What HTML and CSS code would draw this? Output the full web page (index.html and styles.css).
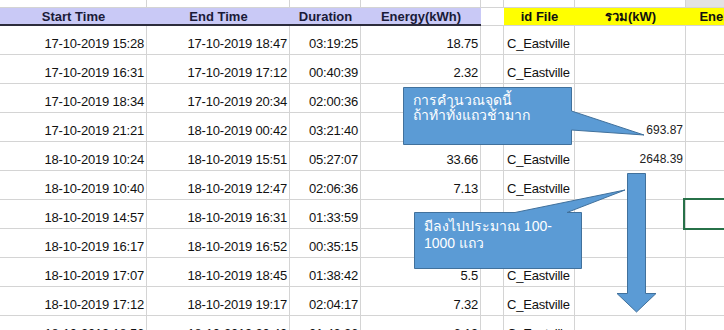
FILE: index.html
```html
<!DOCTYPE html>
<html>
<head>
<meta charset="utf-8">
<link rel="stylesheet" href="styles.css">
</head>
<body>
<div class="sheet">
  <div class="grid">
    <div class="c"></div><div class="c"></div><div class="c"></div><div class="c"></div><div class="c"></div><div class="c"></div><div class="c"></div><div class="c gray"></div>

    <div class="h lav">Start Time</div><div class="h lav">End Time</div><div class="h lav">Duration</div><div class="h lav">Energy(kWh)</div><div class="h blank"></div><div class="h yel">id File</div><div class="h yel">รวม(kW)</div><div class="h yel">Energy(kWh)</div>

    <div class="c r">17-10-2019 15:28</div><div class="c r">17-10-2019 18:47</div><div class="c r">03:19:25</div><div class="c r">18.75</div><div class="c"></div><div class="c">C_Eastville</div><div class="c"></div><div class="c"></div>
    <div class="c r">17-10-2019 16:31</div><div class="c r">17-10-2019 17:12</div><div class="c r">00:40:39</div><div class="c r">2.32</div><div class="c"></div><div class="c">C_Eastville</div><div class="c"></div><div class="c"></div>
    <div class="c r">17-10-2019 18:34</div><div class="c r">17-10-2019 20:34</div><div class="c r">02:00:36</div><div class="c r">15.31</div><div class="c"></div><div class="c">C_Eastville</div><div class="c"></div><div class="c"></div>
    <div class="c r">17-10-2019 21:21</div><div class="c r">18-10-2019 00:42</div><div class="c r">03:21:40</div><div class="c r">22.86</div><div class="c"></div><div class="c">C_Eastville</div><div class="c r sm">693.87</div><div class="c"></div>
    <div class="c r">18-10-2019 10:24</div><div class="c r">18-10-2019 15:51</div><div class="c r">05:27:07</div><div class="c r">33.66</div><div class="c"></div><div class="c">C_Eastville</div><div class="c r sm">2648.39</div><div class="c"></div>
    <div class="c r">18-10-2019 10:40</div><div class="c r">18-10-2019 12:47</div><div class="c r">02:06:36</div><div class="c r">7.13</div><div class="c"></div><div class="c">C_Eastville</div><div class="c"></div><div class="c"></div>
    <div class="c r">18-10-2019 14:57</div><div class="c r">18-10-2019 16:31</div><div class="c r">01:33:59</div><div class="c r">5.85</div><div class="c"></div><div class="c">C_Eastville</div><div class="c"></div><div class="c"></div>
    <div class="c r">18-10-2019 16:17</div><div class="c r">18-10-2019 16:52</div><div class="c r">00:35:15</div><div class="c r">2.41</div><div class="c"></div><div class="c">C_Eastville</div><div class="c"></div><div class="c"></div>
    <div class="c r">18-10-2019 17:07</div><div class="c r">18-10-2019 18:45</div><div class="c r">01:38:42</div><div class="c r">5.5</div><div class="c"></div><div class="c">C_Eastville</div><div class="c"></div><div class="c"></div>
    <div class="c r">18-10-2019 17:12</div><div class="c r">18-10-2019 19:17</div><div class="c r">02:04:17</div><div class="c r">7.32</div><div class="c"></div><div class="c">C_Eastville</div><div class="c"></div><div class="c"></div>
    <div class="c r">18-10-2019 18:56</div><div class="c r">18-10-2019 20:40</div><div class="c r">01:43:26</div><div class="c r">6.19</div><div class="c"></div><div class="c">C_Eastville</div><div class="c"></div><div class="c"></div>
  </div>

  <div class="sel"></div>

  <svg class="shapes" width="724" height="330" viewBox="0 0 724 330">
    <path d="M403.5 87.5 H571.5 V111 L644 135 L571.5 130 V144.5 H403.5 Z" fill="#5b9bd5" stroke="#41719c" stroke-width="1"/>
    <path d="M414.5 212.5 H515 L625 190 L567 212.5 H581.5 V268.5 H414.5 Z" fill="#5b9bd5" stroke="#41719c" stroke-width="1"/>
    <path d="M627.5 173.5 H645.5 V293.5 H656 L636.5 312 L617 293.5 H627.5 Z" fill="#5b9bd5" stroke="#41719c" stroke-width="1"/>
  </svg>

  <div class="note note1">การคำนวณจุดนี้<br>ถ้าทำทั้งแถวช้ามาก</div>
  <div class="note note2">มีลงไปประมาณ 100-<br>1000 แถว</div>
</div>
</body>
</html>
```

FILE: styles.css
```css
html, body {
  margin: 0;
  padding: 0;
  background: #ffffff;
}

.sheet {
  position: relative;
  width: 724px;
  height: 330px;
  overflow: hidden;
  font-family: "Liberation Sans", Arial, sans-serif;
  font-size: 13px;
  color: #111111;
}

.grid {
  display: grid;
  grid-template-columns: 147px 143px 71px 120px 23px 71px 111px 107px;
  grid-template-rows: 8px 18px repeat(11, 29px);
  width: 793px;
}

.c {
  box-sizing: border-box;
  border-right: 1px solid #d4d4d4;
  border-bottom: 1px solid #d4d4d4;
  display: flex;
  align-items: flex-end;
  padding: 0 3px 3px 3px;
  line-height: 15px;
  white-space: nowrap;
  overflow: hidden;
  letter-spacing: -0.2px;
}

.c.r {
  justify-content: flex-end;
  padding-right: 2px;
}

.c.sm {
  font-size: 12px;
  letter-spacing: 0;
  color: #222222;
}

.c.gray {
  background: #e3e3e3;
}

.h {
  box-sizing: border-box;
  display: flex;
  align-items: center;
  justify-content: center;
  font-weight: bold;
  line-height: 15px;
  white-space: nowrap;
  overflow: hidden;
}

.h.lav {
  background: #c9c9f6;
  border-bottom: 2px solid #2c2c3c;
  color: #1a1a38;
}

.h.yel {
  background: #ffff00;
  border-bottom: 1px solid #d4d4d4;
  color: #111111;
}

.h.blank {
  background: #ffffff;
  border-bottom: 1px solid #d4d4d4;
}

.sel {
  position: absolute;
  left: 683px;
  top: 198px;
  width: 60px;
  height: 28px;
  border: 2px solid #277148;
}

.shapes {
  position: absolute;
  left: 0;
  top: 0;
}

.note {
  position: absolute;
  color: #ffffff;
  font-size: 14px;
  white-space: nowrap;
}

.note1 {
  left: 413px;
  top: 93px;
  line-height: 15px;
}

.note2 {
  left: 424px;
  top: 218px;
  line-height: 17px;
}
```
